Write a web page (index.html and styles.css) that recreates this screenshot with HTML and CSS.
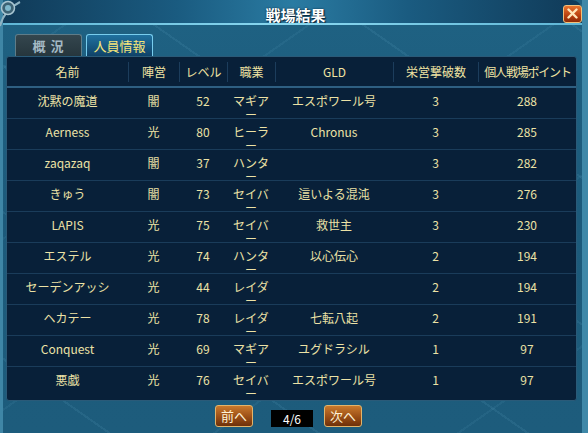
FILE: index.html
```html
<!DOCTYPE html>
<html lang="ja">
<head>
<meta charset="utf-8">
<title>戦場結果</title>
<link rel="stylesheet" href="styles.css">
</head>
<body>
<div class="window">
  <svg class="ornament" width="22" height="30" viewBox="0 0 22 30">
    <path d="M0 26 Q4 10 20 2" fill="none" stroke="#8fb4c4" stroke-width="2"/>
    <circle cx="8" cy="8" r="6.5" fill="#3c6274" stroke="#a9c6d2" stroke-width="1.5"/>
    <circle cx="8" cy="8" r="3" fill="#7fb8cc"/>
  </svg>
  <header class="titlebar">
    <div class="title-spacer"></div>
    <h1 class="title">戦場結果</h1>
    <div class="title-right">
      <button class="close" aria-label="close">
        <svg width="11" height="11" viewBox="0 0 11 11"><path d="M1.5 1.5 L9.5 9.5 M9.5 1.5 L1.5 9.5" stroke="#ffe6b8" stroke-width="2.4" stroke-linecap="round"/></svg>
      </button>
    </div>
  </header>
  <div class="titleline"></div>

  <nav class="tabs">
    <div class="tab">概&nbsp;況</div>
    <div class="tab active">人員情報</div>
  </nav>

  <section class="panel">
    <div class="row head">
      <div class="hc">名前</div>
      <div class="hc">陣営</div>
      <div class="hc">レベル</div>
      <div class="hc">職業</div>
      <div class="hc">GLD</div>
      <div class="hc">栄営撃破数</div>
      <div class="hc narrow">個人戦場ポイント</div>
    </div>
    <div class="row"><div class="c">沈黙の魔道</div><div class="c">闇</div><div class="c">52</div><div class="c job">マギア<br>ー</div><div class="c">エスポワール号</div><div class="c">3</div><div class="c">288</div></div>
    <div class="row"><div class="c">Aerness</div><div class="c">光</div><div class="c">80</div><div class="c job">ヒーラ<br>ー</div><div class="c">Chronus</div><div class="c">3</div><div class="c">285</div></div>
    <div class="row"><div class="c">zaqazaq</div><div class="c">闇</div><div class="c">37</div><div class="c job">ハンタ<br>ー</div><div class="c"></div><div class="c">3</div><div class="c">282</div></div>
    <div class="row"><div class="c">きゅう</div><div class="c">闇</div><div class="c">73</div><div class="c job">セイバ<br>ー</div><div class="c">這いよる混沌</div><div class="c">3</div><div class="c">276</div></div>
    <div class="row"><div class="c">LAPIS</div><div class="c">光</div><div class="c">75</div><div class="c job">セイバ<br>ー</div><div class="c">救世主</div><div class="c">3</div><div class="c">230</div></div>
    <div class="row"><div class="c">エステル</div><div class="c">光</div><div class="c">74</div><div class="c job">ハンタ<br>ー</div><div class="c">以心伝心</div><div class="c">2</div><div class="c">194</div></div>
    <div class="row"><div class="c">セーデンアッシ</div><div class="c">光</div><div class="c">44</div><div class="c job">レイダ<br>ー</div><div class="c"></div><div class="c">2</div><div class="c">194</div></div>
    <div class="row"><div class="c">ヘカテー</div><div class="c">光</div><div class="c">78</div><div class="c job">レイダ<br>ー</div><div class="c">七転八起</div><div class="c">2</div><div class="c">191</div></div>
    <div class="row"><div class="c">Conquest</div><div class="c">光</div><div class="c">69</div><div class="c job">マギア<br>ー</div><div class="c">ユグドラシル</div><div class="c">1</div><div class="c">97</div></div>
    <div class="row last"><div class="c">悪戯</div><div class="c">光</div><div class="c">76</div><div class="c job">セイバ<br>ー</div><div class="c">エスポワール号</div><div class="c">1</div><div class="c">97</div></div>
  </section>

  <footer class="pager">
    <button class="pbtn">前へ</button>
    <div class="pageno">4/6</div>
    <button class="pbtn">次へ</button>
  </footer>
</div>
</body>
</html>
```

FILE: styles.css
```css
* { box-sizing: border-box; }
html, body { margin: 0; padding: 0; }
body {
  width: 588px;
  height: 433px;
  overflow: hidden;
  background: #1b5576;
  font-family: "Noto Sans CJK JP", "DejaVu Sans", sans-serif;
}
.window {
  position: relative;
  width: 588px;
  height: 433px;
  display: flex;
  flex-direction: column;
  background:
    repeating-linear-gradient(35deg, rgba(255,255,255,0) 0 60px, rgba(120,190,220,0.10) 60px 62px, rgba(255,255,255,0) 62px 120px),
    repeating-linear-gradient(-35deg, rgba(255,255,255,0) 0 70px, rgba(120,190,220,0.08) 70px 72px, rgba(255,255,255,0) 72px 140px),
    linear-gradient(180deg, #1f6283 0%, #1c5a7b 50%, #1d5c7c 100%);
  border-left: 3px solid #3f86a6;
  border-right: 6px solid #3f88a8;
}
.ornament {
  position: absolute;
  left: -3px;
  top: 0;
}
.titlebar {
  height: 23px;
  display: grid;
  grid-template-columns: 1fr auto 1fr;
  align-items: center;
  background: linear-gradient(90deg, #103a58 0%, #1a5b80 30%, #2a7ba2 50%, #1a5b80 70%, #103a58 100%);
  border-radius: 10px 10px 0 0;
}
.title {
  margin: 0;
  font-size: 15px;
  font-weight: bold;
  line-height: 23px;
  color: #ffffff;
  padding-top: 3px;
  text-shadow: 0 0 2px #0a2438, 1px 1px 1px #0a2438;
  margin-left: 6px;
}
.title-right {
  display: flex;
  justify-content: flex-end;
  align-items: flex-start;
  height: 23px;
  padding-top: 3px;
}
.close {
  width: 19px;
  height: 18px;
  padding: 0;
  border: 1px solid #f2c07a;
  border-radius: 3px;
  background: linear-gradient(180deg, #e8742e 0%, #b8400e 60%, #8e2a06 100%);
  display: flex;
  align-items: center;
  justify-content: center;
}
.titleline {
  height: 2px;
  background: linear-gradient(90deg, #5fb6d6, #8ad8f0 50%, #5fb6d6);
}
.tabs {
  display: flex;
  gap: 4px;
  padding-left: 12px;
  margin-top: 9px;
  height: 22px;
}
.tab {
  width: 67px;
  height: 22px;
  border: 1px solid #5f7c88;
  border-bottom: none;
  border-radius: 3px 3px 0 0;
  background: linear-gradient(180deg, #34464e 0%, #26363d 100%);
  color: #a3b8c4;
  font-size: 13px;
  font-weight: bold;
  text-align: center;
  line-height: 21px;
  letter-spacing: 1px;
}
.tab.active {
  border-color: #78cdee;
  background: linear-gradient(180deg, #2072a0 0%, #0f4268 100%);
  color: #f6e67a;
  font-weight: normal;
  letter-spacing: 0;
}
.panel {
  margin-left: 3px;
  width: 571px;
  height: 345px;
  background: #082039;
  border: 1px solid #2a5a78;
  border-radius: 3px;
  overflow: hidden;
}
.row {
  display: grid;
  grid-template-columns: 121px 51px 48px 48px 118px 85px 98px;
  height: 31px;
  border-bottom: 1px solid #1a3c5a;
  color: #ece2a6;
  font-size: 12px;
}
.row.last { border-bottom: none; }
.row.head {
  height: 31px;
  align-items: center;
  border-bottom: 2px solid #2e5f82;
  color: #f0e3a2;
  font-size: 12px;
}
.hc {
  height: 20px;
  line-height: 20px;
  text-align: center;
  white-space: nowrap;
}
.hc.narrow { letter-spacing: -1.2px; }
.hc + .hc { border-left: 1px solid #1c3d5c; }
.c {
  text-align: center;
  padding-top: 6px;
  line-height: 14px;
  white-space: nowrap;
}
.pager {
  display: flex;
  align-items: center;
  padding-left: 212px;
  margin-top: 4px;
  height: 22px;
}
.pbtn {
  width: 38px;
  height: 22px;
  padding: 0;
  border: 1px solid #e2b46a;
  border-radius: 3px;
  background: linear-gradient(180deg, #c9792c 0%, #9a4e16 55%, #6e300a 100%);
  color: #fff2d6;
  font-family: "Noto Sans CJK JP", sans-serif;
  font-size: 13px;
  line-height: 20px;
}
.pageno {
  width: 42px;
  height: 17px;
  margin: 5px 11px 0 18px;
  background: #000;
  color: #fff;
  font-size: 12px;
  line-height: 17px;
  text-align: center;
}
```
